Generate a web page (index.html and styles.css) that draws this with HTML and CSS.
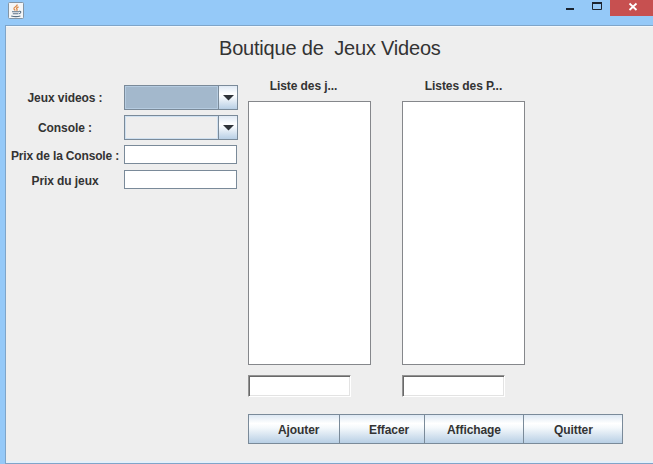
FILE: index.html
```html
<!DOCTYPE html>
<html lang="fr">
<head>
<meta charset="utf-8">
<title>Boutique de Jeux Videos</title>
<link rel="stylesheet" href="styles.css">
</head>
<body>
<div class="window">
  <header class="titlebar">
    <svg class="java" width="16" height="17" viewBox="0 0 16 17">
      <rect x=".5" y=".5" width="15" height="16" rx="1" fill="#f4f6f8" stroke="#8495a5"/>
      <path d="M9.2 2.5C9.6 4.6 5.2 5 6 7c.3.7.9.9 1.2 1.6M10.6 4.8c-2 .9-2.5 1.5-1.7 2.4.4.5.2 1-.4 1.4" fill="none" stroke="#dc8b4a" stroke-width="1.3"/>
      <path d="M4 9.8h7M4.8 11.8h5.4M11 9.3c2.6-.4 2.3 2-.2 2.4M3.2 14c2.3.6 7 .6 9.2 0" fill="none" stroke="#5b7186" stroke-width="1.1"/>
    </svg>
    <div class="controls">
      <svg width="70" height="16" viewBox="0 0 70 16">
        <path d="M26 9h8" stroke="#1b2430" stroke-width="2"/>
        <path d="M52.5 3v6.5h9V3" fill="none" stroke="#1b2430"/>
        <path d="M52 3h10" stroke="#1b2430" stroke-width="2"/>
      </svg>
      <div class="close">
        <svg width="43" height="16" viewBox="0 0 43 16"><path d="M19.5 3.5l7 6.5M26.5 3.5l-7 6.5" stroke="#fff" stroke-width="1.8"/></svg>
      </div>
    </div>
  </header>
  <main class="content">
    <h1 class="heading">Boutique de&nbsp; Jeux Videos</h1>
    <div class="body">
      <div class="form">
        <span class="label l1">Jeux videos :</span>
        <div class="combo selected"><div class="value"></div><div class="arrow"><svg width="11" height="6" viewBox="0 0 11 6"><path d="M0 0h11L5.5 5.5z" fill="#2f3338"/></svg></div></div>
        <span class="label l2">Console :</span>
        <div class="combo"><div class="value"></div><div class="arrow"><svg width="11" height="6" viewBox="0 0 11 6"><path d="M0 0h11L5.5 5.5z" fill="#2f3338"/></svg></div></div>
        <span class="label l3">Prix de la Console :</span>
        <div class="field"></div>
        <span class="label l4">Prix du jeux</span>
        <div class="field"></div>
      </div>
      <div class="right">
        <div class="lists">
          <section class="column">
            <div class="caption games">Liste des j...</div>
            <div class="list"></div>
            <div class="total"></div>
          </section>
          <section class="column">
            <div class="caption prices">Listes des P...</div>
            <div class="list"></div>
            <div class="total"></div>
          </section>
        </div>
        <div class="buttons">
          <div class="button add"><span>Ajouter</span></div>
          <div class="button clear"><span>Effacer</span></div>
          <div class="button show"><span>Affichage</span></div>
          <div class="button quit"><span>Quitter</span></div>
        </div>
      </div>
    </div>
  </main>
</div>
</body>
</html>
```
FILE: styles.css
```css
* { box-sizing: border-box; }
body {
  margin: 0;
  font: bold 12px/14px "Liberation Sans", Arial, sans-serif;
  letter-spacing: -0.08px;
  color: #333;
  overflow: hidden;
}
svg { display: block; }
.window { width: 653px; height: 464px; background: #95c9f8; display: flex; flex-direction: column; }
.titlebar { height: 25px; display: flex; justify-content: space-between; padding-left: 8px; }
.java { margin-top: 2px; }
.controls { display: flex; height: 16px; }
.close { width: 43px; background: #c75050; }
.content {
  height: 439px;
  margin-left: 5px;
  background: #eee;
  border: solid #7fa5c9;
  border-width: 1px 0 1px 1px;
  box-shadow: inset 0 -2px #e4f0fb, inset 0 1px #f5f9fc;
}
.heading {
  margin: 0;
  padding: 10px 0 0 213px;
  height: 51px;
  font-size: 20px;
  line-height: 24px;
  font-weight: normal;
  letter-spacing: -0.2px;
  white-space: nowrap;
}
.body { display: flex; gap: 10px; }
.form {
  width: 232px;
  padding-top: 8px;
  display: grid;
  grid-template-columns: 118px 114px;
  grid-template-rows: 25px 25px 19px 19px;
  row-gap: 5px;
  align-items: center;
  align-content: start;
}
.form .field:last-child { margin-top: 2px; }
.label { text-align: center; white-space: nowrap; }
.l3 { padding-top: 2px; letter-spacing: -0.16px; }
.l4 { padding-top: 4px; }
.combo { display: flex; height: 25px; border: 1px solid #7a8a99; }
.value { flex: 1; background: #eee; border: 1px solid #cfe0f0; }
.selected .value { background: #a3b8cc; border-color: #b5cbe0; }
.arrow {
  width: 19px;
  border-left: 1px solid #7a8a99;
  background: linear-gradient(#dfe9f4, #fff 35%, #f3f7fb 50%, #b8cfe5);
  display: flex;
  align-items: center;
  justify-content: center;
}
.field { width: 113px; height: 19px; background: #fff; border: 1px solid #7a8a99; }
.right { width: 376px; }
.lists { display: flex; gap: 31px; }
.column { width: 123px; }
.caption { height: 24px; padding-top: 2px; text-align: center; white-space: nowrap; }
.games { padding-right: 12px; }
.list { height: 264px; background: #fff; border: 1px solid #85878b; }
.total {
  width: 103px;
  height: 22px;
  margin-top: 10px;
  background: #fff;
  border: 1px solid;
  border-color: #939393 #fff #fff #939393;
  box-shadow: inset 1px 1px #696969, inset -1px -1px #e3e3e3;
}
.buttons { display: flex; margin-top: 17px; width: 375px; border: 1px solid #7a8a99; }
.button {
  height: 28px;
  padding-top: 8px;
  white-space: nowrap;
  background: linear-gradient(#dde8f3, #fff 30%, #f5f9fc 45%, #b8cfe5);
}
.button + .button { border-left: 1px solid #7a8a99; }
.add { width: 90px; padding-left: 29px; }
.clear { width: 85px; padding-left: 29px; }
.show { width: 99px; padding-left: 22px; }
.quit { width: 99px; padding-left: 30px; }
```
